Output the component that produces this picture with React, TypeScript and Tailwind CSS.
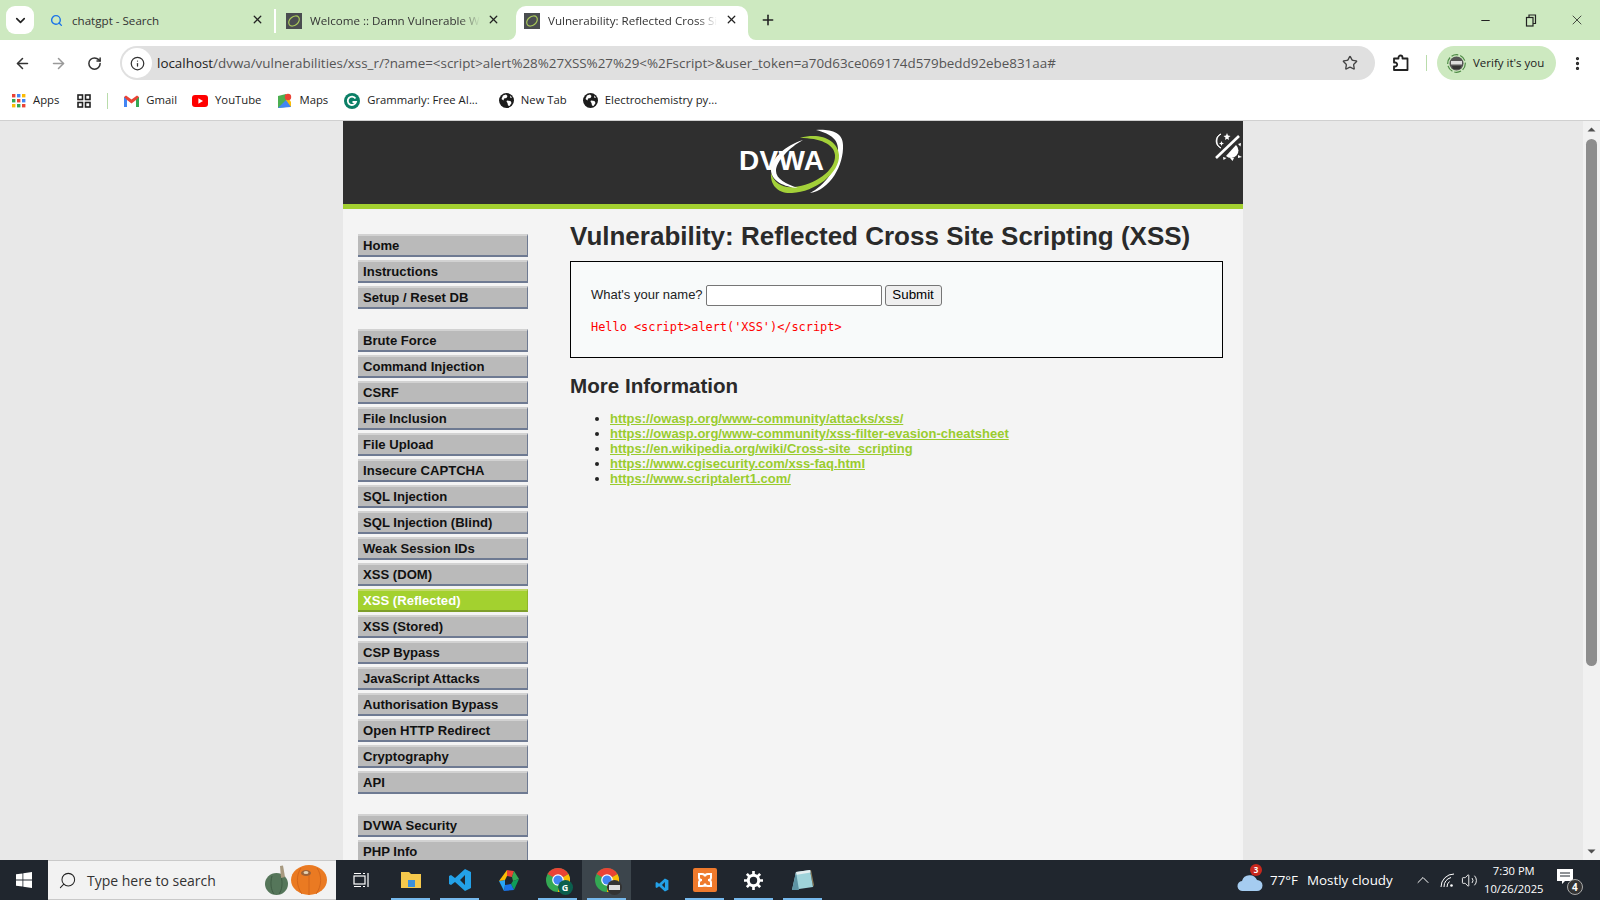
import React from "react";
import { ArrowLeft, ArrowRight, RotateCw, Info, Star, EllipsisVertical, X, Plus, ChevronDown, Search, Minus, ChevronUp, Volume2 } from "lucide-react";

const group1 = ["Home", "Instructions", "Setup / Reset DB"];
const group2 = ["Brute Force", "Command Injection", "CSRF", "File Inclusion", "File Upload", "Insecure CAPTCHA", "SQL Injection", "SQL Injection (Blind)", "Weak Session IDs", "XSS (DOM)", "XSS (Reflected)", "XSS (Stored)", "CSP Bypass", "JavaScript Attacks", "Authorisation Bypass", "Open HTTP Redirect", "Cryptography", "API"];
const group3 = ["DVWA Security", "PHP Info"];
const links = ["https://owasp.org/www-community/attacks/xss/", "https://owasp.org/www-community/xss-filter-evasion-cheatsheet", "https://en.wikipedia.org/wiki/Cross-site_scripting", "https://www.cgisecurity.com/xss-faq.html", "https://www.scriptalert1.com/"];

function Fav() {
  return (
    <svg width="16" height="16" viewBox="0 0 16 16" className="shrink-0">
      <rect width="16" height="16" fill="#4a4d50" />
      <ellipse cx="8" cy="8" rx="6" ry="4.2" transform="rotate(-40 8 8)" fill="none" stroke="#a9c95a" strokeWidth="1.2" />
    </svg>
  );
}

function Tab({ title, active, search }: { title: string; active?: boolean; search?: boolean }) {
  return (
    <div className={`relative flex h-[34px] w-[232px] shrink-0 items-center pb-[5px] ${search ? "pl-[6px]" : "pl-[8px]"} ${active ? "rounded-t-[10px] bg-white" : ""}`}>
      {active && (
        <svg width="8" height="8" viewBox="0 0 8 8" className="absolute -left-[8px] bottom-0"><path d="M8 0v8H0a8 8 0 0 0 8-8Z" fill="#fff" /></svg>
      )}
      {active && (
        <svg width="8" height="8" viewBox="0 0 8 8" className="absolute -right-[8px] bottom-0"><path d="M0 0v8h8a8 8 0 0 1-8-8Z" fill="#fff" /></svg>
      )}
      <div className="mr-[8px] flex w-[16px] shrink-0 justify-center">
        {search ? <Search size={13} strokeWidth={2.6} className="text-[#1a73e8]" /> : <Fav />}
      </div>
      <span className={`whitespace-nowrap text-[11.6px] text-[#333] ${search ? "" : "[mask-image:linear-gradient(to_right,#000_88%,transparent)]"}`}>{title}</span>
      <X size={13} strokeWidth={2.4} className="absolute right-[10px] top-[7px] text-[#222]" />
    </div>
  );
}

function Bookmark({ icon, label, gap }: { icon: React.ReactNode; label: string; gap: string }) {
  return (
    <div className={`flex items-center gap-[7px] ${gap}`}>
      {icon}
      <span className="whitespace-nowrap text-[11.3px] text-[#222]">{label}</span>
    </div>
  );
}

function MenuItem({ label, active }: { label: string; active?: boolean }) {
  return (
    <div className={`mb-[3px] flex h-[23px] w-[170px] items-center border-t-2 border-r border-b-2 pl-[5px] text-[13.1px] font-bold ${active ? "border-t-[#c3d96a] border-r-[#8fb52a] border-b-[#7e9e2c] bg-[#a3d12f] text-white" : "border-t-[#d2d2d2] border-r-[#6e7a92] border-b-[#6e7a92] bg-[#bababa] text-[#111]"}`}>
      {label}
    </div>
  );
}

function GlobeDark() {
  return (
    <svg width="15" height="15" viewBox="0 0 15 15" className="shrink-0">
      <circle cx="7.5" cy="7.5" r="7.500" fill="#1c1c1c" />
      <path d="M4 2.500l3-1 1.500 1.500-1 2-2.500.5-.5 2-2-1.500Z M8 7.500l3.500.5 1 2-2 3-1.500-.5-.5-2.500-1-1.500Z M11 2.500l2 2-1.500.5Z" fill="#fff" />
    </svg>
  );
}

function Logo() {
  return (
    <div className="relative h-[70px] w-[120px]">
      <svg width="120" height="70" viewBox="0 0 120 70" className="absolute left-0 top-0">
        <path d="M86 5C100 4 113 7 113 20C114 40 100 65 80 68C94 61 108 44 108 24C108 13 98 8 86 5Z" fill="#fff" />
        <path d="M70 13C90 7 108 15 109 30C110 48 85 67 62 68C48 69 40 60 41 48C44 58 52 63 64 62C84 60 106 46 105 30C104 19 90 13 70 13Z" fill="#a3d039" />
        <path d="M73 15C56 20 40 34 41 46C42 56 54 62 68 63C56 59 46 54 46 46C46 36 60 22 73 15Z" fill="#fff" />
      </svg>
      <span className="absolute left-[9px] top-[22px] text-[28px] leading-[28px] font-bold tracking-[0.3px] text-white">DVWA</span>
    </div>
  );
}

function TaskIcon({ children, bar, active }: { children: React.ReactNode; bar?: boolean; active?: boolean }) {
  return (
    <div className={`relative flex h-[40px] w-[49px] items-center justify-center ${active ? "bg-[#3c454c]" : ""}`}>
      {children}
      {bar && <div className="absolute bottom-0 left-[5px] right-[5px] h-[2px] bg-[#76b9ed]" />}
    </div>
  );
}

function ChromeLogo({ badge }: { badge: React.ReactNode }) {
  return (
    <div className="relative h-[24px] w-[24px]">
      <svg width="24" height="24" viewBox="0 0 24 24">
        <circle cx="12" cy="12" r="12" fill="#34a853" />
        <path d="M12 12L22.400 6A12 12 0 0 1 12 24Z" fill="#fbbc05" />
        <path d="M12 12L22.400 6A12 12 0 0 0 1.600 6Z" fill="#ea4335" />
        <circle cx="12" cy="12" r="5.800" fill="#fff" />
        <circle cx="12" cy="12" r="4.600" fill="#4285f4" />
      </svg>
      {badge}
    </div>
  );
}

function VsIcon({ size }: { size: number }) {
  return (
    <svg width={size} height={size} viewBox="0 0 24 24">
      <path d="M17 1l6 3v16l-6 3-10-9-4 3-2-1V8l2-1 4 3ZM17 7l-5 5 5 5Z" fill="#23a1e8" />
    </svg>
  );
}

export default function App() {
  return (
    <div className="flex h-[900px] w-[1600px] flex-col overflow-hidden bg-white" style={{ fontFamily: "'Open Sans','Noto Sans',sans-serif" }}>
      {/* tab strip */}
      <div className="flex h-[40px] shrink-0 bg-[#cde9c0]">
        <div className="ml-[6px] mt-[6px] flex h-[28px] w-[28px] items-center justify-center rounded-[9px] bg-white"><ChevronDown size={15} strokeWidth={2.6} className="text-[#222]" /></div>
        <div className="ml-[8px] flex items-end">
          <Tab title="chatgpt - Search" search />
        </div>
        <div className="mb-[7px] mt-[9px] w-[2px] bg-white" />
        <div className="ml-[2px] flex items-end">
          <Tab title="Welcome :: Damn Vulnerable W" />
        </div>
        <div className="ml-[6px] flex items-end">
          <Tab title="Vulnerability: Reflected Cross Si" active />
        </div>
        <div className="flex h-[40px] items-center pl-[12px]"><Plus size={16} strokeWidth={2.4} className="text-[#222]" /></div>
        <div className="ml-auto flex h-[40px] items-center text-[#222]">
          <div className="flex w-[46px] justify-center"><Minus size={13} strokeWidth={2} /></div>
          <div className="flex w-[46px] justify-center">
            <svg width="12" height="13" viewBox="0 0 12 13" fill="none" stroke="#222" strokeWidth="1.200"><rect x="1.500" y="3.500" width="6.500" height="8.500" /><path d="M4 3.500V1h6.500v8.500H8" /></svg>
          </div>
          <div className="flex w-[46px] justify-center"><X size={16} strokeWidth={1.2} /></div>
        </div>
      </div>
      {/* toolbar */}
      <div className="flex h-[46px] shrink-0 items-center rounded-t-[8px] bg-white">
        <ArrowLeft size={17} strokeWidth={2.2} className="ml-[14px] text-[#333]" />
        <ArrowRight size={17} strokeWidth={2.2} className="ml-[19px] text-[#999]" />
        <RotateCw size={15} strokeWidth={2.4} className="ml-[20px] text-[#333]" />
        <div className="ml-[18px] flex h-[34px] w-[1255px] items-center rounded-full bg-[#e0e0e0] pl-[2px]">
          <div className="flex h-[30px] w-[30px] items-center justify-center rounded-full bg-white"><Info size={15} strokeWidth={2} className="text-[#333]" /></div>
          <span className="ml-[5px] whitespace-nowrap text-[13.4px] text-[#555]"><span className="text-[#222]">localhost</span>/dvwa/vulnerabilities/xss_r/?name=&lt;script&gt;alert%28%27XSS%27%29&lt;%2Fscript&gt;&amp;user_token=a70d63ce069174d579bedd92ebe831aa#</span>
          <Star size={16} strokeWidth={2} className="ml-auto mr-[17px] text-[#444]" />
        </div>
        <svg width="18" height="18" viewBox="0 0 18 18" fill="none" stroke="#222" strokeWidth="1.800" strokeLinejoin="round" className="ml-[17px] shrink-0">
          <path d="M2 16v-3.500h1.200a2 2 0 0 0 0-4H2V4.500h4.500V3.500a2 2 0 0 1 4 0v1h5V16Z" />
        </svg>
        <div className="ml-[16px] h-[16px] w-[1px] bg-[#b9dcab]" />
        <div className="ml-[10px] flex h-[34px] w-[119px] items-center rounded-full bg-[#cde9c0] pl-[10px]">
          <svg width="19" height="19" viewBox="0 0 19 19" className="shrink-0">
            <circle cx="9.500" cy="9.500" r="8.800" fill="none" stroke="#4d8a45" strokeWidth="1.200" strokeDasharray="7 2" />
            <circle cx="9.500" cy="9.500" r="7" fill="#555" />
            <rect x="4" y="7" width="11" height="3.500" fill="#ddd" />
            <path d="M5 12h9l-1 3H6Z" fill="#333" />
          </svg>
          <span className="ml-[7px] whitespace-nowrap text-[11.5px] text-[#222]">Verify it's you</span>
        </div>
        <EllipsisVertical size={17} strokeWidth={2.6} className="ml-[13px] text-[#222]" />
      </div>
      {/* bookmarks */}
      <div className="flex h-[35px] shrink-0 items-center border-b border-[#d0d0d0] bg-white pb-[5px] pl-[12px]">
        <Bookmark gap="mr-[18px]" label="Apps" icon={<svg width="14" height="14" viewBox="0 0 14 14">{[0,5,10].flatMap((y,i)=>[0,5,10].map((x,j)=><rect key={`${i}${j}`} x={x} y={y} width="3.400" height="3.400" fill={["#ea4335","#4285f4","#fbbc05","#34a853","#ea4335","#4285f4","#fbbc05","#34a853","#ea4335"][i*3+j]} />))}</svg>} />
        <svg width="14" height="14" viewBox="0 0 14 14" fill="none" stroke="#222" strokeWidth="1.600"><rect x="1" y="1" width="4.500" height="4.500" /><rect x="8.500" y="1" width="4.500" height="4.500" /><rect x="1" y="8.500" width="4.500" height="4.500" /><rect x="8.500" y="8.500" width="4.500" height="4.500" /></svg>
        <div className="ml-[16px] mr-[16px] h-[16px] w-[1px] bg-[#b9dcab]" />
        <Bookmark gap="mr-[15px]" label="Gmail" icon={<svg width="15" height="12" viewBox="0 0 15 12"><path d="M0 2v10h3V5l4.500 3.500L12 5v7h3V2L13 .5 7.500 4.500 2 .5Z" fill="#ea4335" /><path d="M0 2v10h3V5Z" fill="#4285f4" /><path d="M15 2v10h-3V5Z" fill="#34a853" /></svg>} />
        <Bookmark gap="mr-[16px]" label="YouTube" icon={<svg width="16" height="12" viewBox="0 0 16 12"><rect width="16" height="12" rx="3" fill="#f00" /><path d="M6.400 3.200v5.600L11 6Z" fill="#fff" /></svg>} />
        <Bookmark gap="mr-[16px]" label="Maps" icon={<svg width="15" height="15" viewBox="0 0 15 15"><path d="M1 3l8-2v13l-8 1Z" fill="#4caf50" /><path d="M9 1l5 8v5H9Z" fill="#fbbc05" /><path d="M1 15l8-8 5 7Z" fill="#4285f4" /><circle cx="11" cy="4" r="3.200" fill="#ea4335" /></svg>} />
        <Bookmark gap="mr-[21px]" label="Grammarly: Free AI..." icon={<svg width="16" height="16" viewBox="0 0 16 16"><circle cx="8" cy="8" r="8" fill="#0b7f66" /><path d="M11.500 5.500A4.200 4.200 0 1 0 12 9H8.500" fill="none" stroke="#fff" strokeWidth="1.800" /></svg>} />
        <Bookmark gap="mr-[16px]" label="New Tab" icon={<GlobeDark />} />
        <Bookmark gap="" label="Electrochemistry py..." icon={<GlobeDark />} />
      </div>
      {/* page */}
      <div className="flex min-h-0 flex-1 bg-[#e8e8e8]" style={{ fontFamily: "'Liberation Sans',Arial,sans-serif" }}>
        <div className="w-[343px] shrink-0" />
        <div className="w-[900px] shrink-0 bg-[#f4f4f4]">
          <div className="relative flex h-[88px] justify-center border-b-[5px] border-[#a3d030] bg-[#2f2f2f] pt-[4px]">
            <div className="ml-[-6px]"><Logo /></div>
            <svg width="38" height="40" viewBox="0 0 38 40" className="absolute right-0 top-[4px]">
              <path d="M16 9A8 8 0 0 0 16 23 A7.500 7.500 0 0 1 16 9Z" fill="#fff" stroke="#fff" strokeWidth="1" />
              <path d="M22 8l1 2.500 2.500.5-2 1.500.5 2.500-2-1.300-2 1.300.5-2.500-2-1.500 2.500-.5Z" fill="#fff" />
              <path d="M16.500 16l.7 1.800 1.800.7-1.800.7-.7 1.800-.7-1.800-1.800-.7 1.800-.7Z" fill="#fff" />
              <path d="M11 33L34 11" stroke="#fff" strokeWidth="2.600" />
              <path d="M31 20A7 7 0 0 1 21 31Z" fill="#fff" />
              <path d="M33 19l3-1-.5 3.500Z M33 30l4 2-4 1Z M25 33l4 0-1.500 3Z M18 32l3.500 1-3 2Z" fill="#fff" />
            </svg>
          </div>
          <div className="flex">
            <div className="ml-[15px] mt-[25px] w-[170px] shrink-0">
              {group1.map((l) => <MenuItem key={l} label={l} />)}
              <div className="h-[17px]" />
              {group2.map((l) => <MenuItem key={l} label={l} active={l === "XSS (Reflected)"} />)}
              <div className="h-[17px]" />
              {group3.map((l) => <MenuItem key={l} label={l} />)}
            </div>
            <div className="ml-[42px] w-[653px] text-[#222]">
              <h1 className="mt-[12px] whitespace-nowrap text-[26px] leading-[31px] font-bold text-[#2a2a2a]">Vulnerability: Reflected Cross Site Scripting (XSS)</h1>
              <div className="mt-[9px] h-[97px] border border-black bg-[#f8fafa] pl-[20px] pt-[22px]">
                <div className="flex h-[22px] items-center text-[13px]">
                  <span>What's your name?</span>
                  <div className="ml-[3px] h-[21px] w-[176px] rounded-[2px] border border-[#767676] bg-white" />
                  <div className="ml-[3px] flex h-[21px] w-[57px] items-center justify-center rounded-[3px] border border-[#767676] bg-[#efefef] text-[13.33px] text-black">Submit</div>
                </div>
                <div className="mt-[13px] text-[11.9px] text-[#f00]" style={{ fontFamily: "'DejaVu Sans Mono',monospace" }}>Hello &lt;script&gt;alert('XSS')&lt;/script&gt;</div>
              </div>
              <h2 className="mt-[16px] text-[20.6px] leading-[24px] font-bold text-[#2a2a2a]">More Information</h2>
              <ul className="mt-[13px] list-disc pl-[40px] text-[13px] leading-[15px] font-bold text-[#9acc2e]">
                {links.map((l) => <li key={l} className="marker:text-[#222]"><span className="underline">{l}</span></li>)}
              </ul>
            </div>
          </div>
        </div>
        <div className="flex-1" />
        <div className="relative w-[17px] shrink-0 bg-[#f1f1f1]">
          <svg width="17" height="17" viewBox="0 0 17 17" className="absolute top-0"><path d="M4.500 10.500L8.500 6.500l4 4Z" fill="#505050" /></svg>
          <div className="absolute left-[3px] top-[18px] h-[527px] w-[11px] rounded-full bg-[#8d8d8d]" />
          <svg width="17" height="17" viewBox="0 0 17 17" className="absolute bottom-0"><path d="M4.500 6.500L8.500 10.500l4-4Z" fill="#505050" /></svg>
        </div>
      </div>
      {/* taskbar */}
      <div className="flex h-[40px] shrink-0 items-center bg-[#20262e] text-white" style={{ fontFamily: "'Open Sans',sans-serif" }}>
        <div className="flex h-[40px] w-[48px] items-center justify-center">
          <svg width="16" height="16" viewBox="0 0 16 16" fill="#fff"><path d="M0 2.300l6.500-.9v6.200H0Z M7.300 1.300L16 0v7.600H7.300Z M0 8.400h6.500v6.200L0 13.700Z M7.300 8.400H16V16l-8.700-1.300Z" /></svg>
        </div>
        <div className="flex h-[40px] w-[288px] items-center border-y border-[#c9c9c9] bg-[#f2f2f2] pl-[10px] pr-[9px] text-[#333]">
          <Search size={19} strokeWidth={1.3} className="-scale-x-100 text-[#222]" />
          <span className="ml-[10px] text-[14px]">Type here to search</span>
          <svg width="62" height="30" viewBox="0 0 62 30" className="ml-auto shrink-0">
            <ellipse cx="11.500" cy="19" rx="11.500" ry="11" fill="#55765a" />
            <path d="M7 11C5 18 6 25 9 29M16 11C18 18 17 25 14 29" stroke="#3f5c44" fill="none" />
            <path d="M15 1l3-.5 2 11.500-4 1Z" fill="#a89a80" />
            <ellipse cx="44" cy="15" rx="18" ry="15" fill="#ea7a22" />
            <path d="M36 3C31 10 31 21 37 29M52 3C57 10 57 21 51 29M44 6V30" stroke="#d4661a" fill="none" />
            <ellipse cx="41" cy="8" rx="5" ry="3" fill="#9c6238" />
            <ellipse cx="41" cy="7.500" rx="2.500" ry="1.500" fill="#e3d3b5" />
          </svg>
        </div>
        <div className="flex w-[50px] justify-center">
          <svg width="18" height="18" viewBox="0 0 18 18" fill="none" stroke="#fff" strokeWidth="1.200"><rect x="2" y="5" width="11" height="8" /><path d="M2 2.500h7M2 15.500h7M11 2.500h2M11 15.500h2M16 2v14" /></svg>
        </div>
        <TaskIcon bar><svg width="22" height="20" viewBox="0 0 22 20"><path d="M1 2h8l2 2h10v14H1Z" fill="#f5c84c" /><rect x="8" y="10" width="7" height="7" fill="#3b8fd9" /></svg></TaskIcon>
        <TaskIcon bar><VsIcon size={24} /></TaskIcon>
        <TaskIcon>
          <svg width="20" height="21" viewBox="0 0 20 21">
            <path d="M8 0l7 1-2 6-5-1Z" fill="#ea4335" />
            <path d="M15 1l5 8-6 2-1-4Z" fill="#34a853" />
            <path d="M20 9l-5 11-3-6 2-3Z" fill="#0f9d58" />
            <path d="M15 20L5 21l1-6 6-1Z" fill="#1a73e8" />
            <path d="M5 21L0 11l6-1v5Z" fill="#29a5f5" />
            <path d="M0 11L8 0v6l-2 4Z" fill="#fbbc05" />
          </svg>
        </TaskIcon>
        <TaskIcon bar><ChromeLogo badge={<div className="absolute -bottom-[3px] -right-[3px] flex h-[15px] w-[15px] items-center justify-center rounded-full bg-[#0b5f4e] text-[9px] font-bold text-white">G</div>} /></TaskIcon>
        <TaskIcon bar active><ChromeLogo badge={<div className="absolute -bottom-[3px] -right-[3px] h-[15px] w-[15px] rounded-full bg-[#333]"><div className="mx-auto mt-[5px] h-[5px] w-[11px] bg-[#ddd]" /></div>} /></TaskIcon>
        <div className="flex h-[40px] w-[49px] items-center justify-center pl-[12px] pt-[10px]"><VsIcon size={14} /></div>
        <TaskIcon bar>
          <svg width="24" height="24" viewBox="0 0 24 24">
            <rect width="24" height="24" rx="2" fill="#ef7a2c" />
            <path d="M6 6h3q3 0 3 2.500q0-2.500 3-2.500h3v3.500q0 2.500-3 2.500q3 0 3 2.500v3.500h-3q-3 0-3-2.500q0 2.500-3 2.500H6v-3.500q0-2.500 3-2.500q-3 0-3-2.500Z" fill="none" stroke="#fff" strokeWidth="2" />
          </svg>
        </TaskIcon>
        <TaskIcon bar><svg width="19" height="19" viewBox="0 0 20 20" fill="none" stroke="#fff"><circle cx="10" cy="10" r="5.500" strokeWidth="3.200" /><path d="M10 0v4M10 16v4M0 10h4M16 10h4M3 3l3 3M14 14l3 3M17 3l-3 3M3 17l3-3" strokeWidth="2.800" /></svg></TaskIcon>
        <TaskIcon bar>
          <svg width="24" height="22" viewBox="0 0 24 22">
            <path d="M19 1l3 17 1-2L20 1Z" fill="#8a7a55" />
            <path d="M5 3L19 1l3 17L1 21Z" fill="#9fd3da" />
            <path d="M5 3L19 1l.6 2.500L4.500 6Z" fill="#e4eef0" />
            <path d="M5 3L8 21 1 21Z" fill="#5d93a3" />
          </svg>
        </TaskIcon>
        <div className="relative ml-[410px] h-[24px] w-[26px]">
          <svg width="26" height="20" viewBox="0 0 26 20" className="absolute bottom-0"><path d="M6 19a5 5 0 0 1-1-10 8 8 0 0 1 15-1 5.500 5.500 0 0 1 0 11Z" fill="#a5ccf0" /></svg>
          <div className="absolute -top-[4px] right-[1px] flex h-[12px] w-[12px] items-center justify-center rounded-full bg-[#c8281e] text-[8px] font-bold">3</div>
        </div>
        <span className="ml-[7px] text-[13.4px]">77°F</span>
        <span className="ml-[9px] text-[13.4px]">Mostly cloudy</span>
        <ChevronUp size={20} strokeWidth={1.2} className="ml-[20px]" />
        <svg width="15" height="15" viewBox="0 0 15 15" fill="none" stroke="#fff" strokeWidth="1" className="ml-[7px] shrink-0">
          <path d="M1 14A13 13 0 0 1 14 1M4 14A10 10 0 0 1 11 4.500M7 14A7 7 0 0 1 9.500 8.500" />
          <circle cx="11.500" cy="12.500" r="1.300" fill="#fff" stroke="none" />
        </svg>
        <Volume2 size={17} strokeWidth={1.3} className="ml-[6px]" />
        <div className="ml-[5px] flex w-[62px] flex-col items-center text-[11.2px] leading-[18px]">
          <span>7:30 PM</span>
          <span>10/26/2025</span>
        </div>
        <div className="relative ml-[12px] h-[24px] w-[24px]">
          <svg width="17" height="18" viewBox="0 0 17 18" className="absolute left-0 top-0"><path d="M0 1h16v12H8l-3 3v-3H0Z" fill="#fff" /><path d="M3 5h10M3 8h10" stroke="#20262e" /></svg>
          <div className="absolute -bottom-[3px] right-[-2px] flex h-[16px] w-[16px] items-center justify-center rounded-full border border-[#aaa] bg-[#333] text-[10px] font-bold">4</div>
        </div>
      </div>
    </div>
  );
}
